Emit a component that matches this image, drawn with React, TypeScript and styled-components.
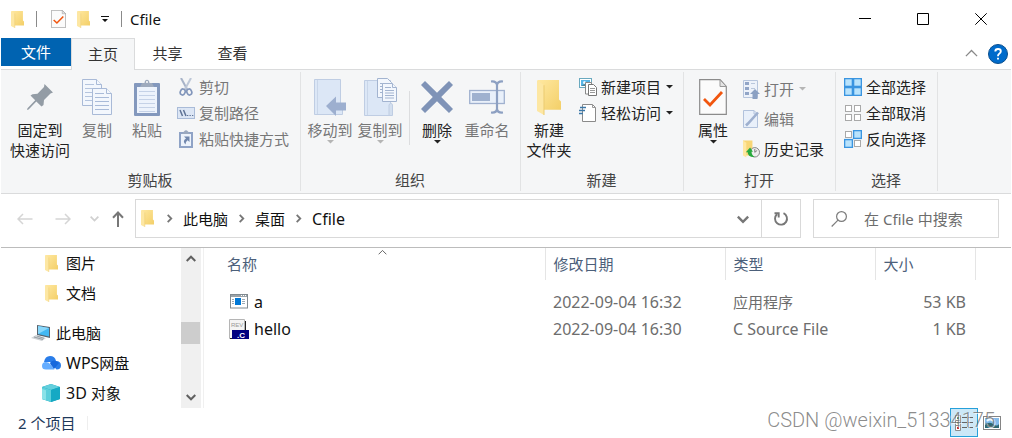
import React from "react";
import styled, { createGlobalStyle, css } from "styled-components";

const GlobalStyle = createGlobalStyle`
  * { box-sizing: border-box; }
  body {
    margin: 0;
    background: #fff;
    color: #111;
    font: 15px/20px "Noto Sans", "Noto Sans CJK SC", sans-serif;
  }
  button, input { font: inherit; color: inherit; background: none; border: 0; padding: 0; margin: 0; }
  svg { display: block; flex: none; }
  ul { list-style: none; margin: 0; padding: 0; }
`;

const Window = styled.div`
  position: relative;
  display: flex;
  flex-direction: column;
  min-height: 100vh;
  padding: 0 1px;
`;

const Latin = styled.span`
  font-size: 16px;
`;

/* Title bar */
const TitleBar = styled.header`
  display: flex;
  align-items: center;
  height: 38px;
  padding: 0 1px 0 10px;
`;
const QuickAccess = styled.div`
  display: flex;
  align-items: center;
  gap: 12px;
`;
const TitleRule = styled.span`
  width: 1px;
  height: 16px;
  background: #8a8a8a;
`;
const QuickButtons = styled.div`
  display: flex;
  align-items: center;
  gap: 11px;
  padding-left: 2px;
`;
const PlainButton = styled.button`
  display: flex;
  align-items: center;
  justify-content: center;
`;
const WindowTitle = styled.h1`
  margin: 0 auto 0 8px;
  font-size: 15px;
  font-weight: 400;
`;
const WindowButton = styled(PlainButton)`
  width: 58px;
  height: 38px;
`;

/* Ribbon tabs */
const TabBar = styled.nav`
  display: flex;
  height: 31px;
`;
const Tab = styled.button<{ $kind?: "file" | "active" }>`
  width: 65px;
  height: 31px;
  padding-bottom: 2px;
  color: #333;
  ${(p) =>
    p.$kind === "file" &&
    css`
      width: 70px;
      height: 28px;
      padding-bottom: 0;
      background: #0063b1;
      color: #fff;
    `}
  ${(p) =>
    p.$kind === "active" &&
    css`
      position: relative;
      width: 64px;
      height: 32px;
      background: #f5f6f7;
      border: 1px solid #dadbdc;
      border-bottom: 0;
    `}
`;
const TabActions = styled.div`
  display: flex;
  align-items: center;
  gap: 10px;
  margin-left: auto;
  padding-right: 3px;
`;

/* Ribbon */
const Ribbon = styled.section`
  display: flex;
  height: 125px;
  padding: 2px 0;
  background: #f5f6f7;
  border-top: 1px solid #dadbdc;
  border-bottom: 1px solid #dadbdc;
`;
const GroupBox = styled.section<{ $width: number }>`
  display: flex;
  flex-direction: column;
  flex: none;
  width: ${(p) => p.$width}px;
  border-right: 1px solid #e2e3e4;
`;
const GroupBody = styled.div<{ $pad: number }>`
  display: flex;
  flex: 1;
  padding: 2px 0 0 ${(p) => p.$pad}px;
`;
const GroupLabel = styled.h2`
  margin: 0;
  padding: 0 1px 1px 0;
  font-size: 15px;
  font-weight: 400;
  text-align: center;
  color: #444;
`;
const Big = styled.button<{ $width?: number }>`
  display: flex;
  flex-direction: column;
  align-items: center;
  align-self: flex-start;
  width: ${(p) => p.$width ?? 50}px;
  white-space: nowrap;
  color: #222;
  &:disabled { color: #777; }
`;
const BigIcon = styled.span`
  display: flex;
  align-items: center;
  justify-content: center;
  height: 46px;
`;
const SmallColumn = styled.div<{ $row: number }>`
  display: grid;
  grid-auto-rows: ${(p) => p.$row}px;
  align-content: start;
  justify-items: start;
  margin-left: 5px;
`;
const Small = styled.button`
  display: flex;
  align-items: center;
  gap: 4px;
  white-space: nowrap;
  color: #222;
  &:disabled { color: #777; }
`;
const CaretSlot = styled.span`
  padding-left: 1px;
`;
const Divider = styled.span`
  width: 1px;
  height: 54px;
  margin: 17px 2px 0 4px;
  background: #dcdddf;
`;

/* Address bar */
const AddressRow = styled.div`
  display: flex;
  align-items: center;
  height: 54px;
  padding: 0 12px 4px 10px;
  border-bottom: 1px solid #bcbcbc;
`;
const NavButton = styled(PlainButton)<{ $width: number }>`
  width: ${(p) => p.$width}px;
  height: 38px;
`;
const AddressBox = styled.div`
  display: flex;
  flex: 1;
  align-items: center;
  height: 39px;
  margin-right: 12px;
  border: 1px solid #d9d9d9;
`;
const Crumbs = styled.div`
  display: flex;
  flex: 1;
  align-items: center;
  gap: 9px;
  padding-left: 5px;
`;
const CrumbIcon = styled.span`
  padding-right: 2px;
`;
const Crumb = styled.a`
  color: #111;
  text-decoration: none;
`;
const Refresh = styled(PlainButton)`
  width: 39px;
  height: 37px;
  border-left: 1px solid #d9d9d9;
`;
const Search = styled.label`
  display: flex;
  align-items: center;
  gap: 16px;
  width: 186px;
  height: 39px;
  padding-left: 17px;
  border: 1px solid #d9d9d9;
`;
const SearchInput = styled.input`
  flex: 1;
  min-width: 0;
  outline: 0;
  &::placeholder { color: #6d6d6d; opacity: 1; }
`;

/* Body */
const Body = styled.main`
  display: flex;
  flex: 1;
`;
const Sidebar = styled.nav`
  width: 180px;
`;
const Tree = styled.ul`
  & + & { padding-top: 10px; }
`;
const TreeItem = styled.li<{ $depth: number }>`
  padding-left: ${(p) => (p.$depth === 0 ? 30 : 40)}px;
`;
const TreeLink = styled.a`
  display: grid;
  grid-template-columns: 20px 1fr;
  align-items: center;
  gap: 5px;
  height: 30px;
  color: #111;
  text-decoration: none;
  svg { justify-self: center; }
`;
const ScrollTrack = styled.div`
  display: flex;
  flex-direction: column;
  width: 20px;
  background: #f0f0f0;
`;
const ScrollButton = styled(PlainButton)`
  height: 22px;
`;
const Thumb = styled.span`
  height: 22px;
  margin: 52px 1px auto 0;
  background: #cdcdcd;
`;
const FilePane = styled.section`
  position: relative;
  flex: 1;
  margin-left: 2px;
  border-left: 1px solid #f0f0f0;
`;
const SortMark = styled.span`
  position: absolute;
  top: 0;
  left: 174px;
`;
const FileTable = styled.table`
  border-collapse: collapse;
  table-layout: fixed;
  width: 771px;
`;
const HeadCell = styled.th<{ $width: number }>`
  width: ${(p) => p.$width}px;
  height: 32px;
  padding: 0 0 0 8px;
  text-align: left;
  font-weight: 400;
  color: #4c607a;
  border-right: 1px solid #e5e5e5;
  &:first-child { padding-left: 23px; }
`;
const Rows = styled.tbody`
  &::before { content: ""; display: block; height: 8px; }
`;
const Cell = styled.td<{ $right?: boolean }>`
  height: 27px;
  padding: 0 9px 0 8px;
  color: #6d6d6d;
  text-align: ${(p) => (p.$right ? "right" : "left")};
  white-space: nowrap;
`;
const NameCell = styled(Cell)`
  padding-left: 25px;
  color: #111;
`;
const FileName = styled.span`
  display: flex;
  align-items: center;
  gap: 5px;
`;

/* Status bar */
const StatusBar = styled.footer`
  display: flex;
  align-items: center;
  height: 30px;
  padding: 0 5px 1px 17px;
  color: #1e395b;
`;
const Count = styled.span`
  padding-right: 12px;
  margin-right: auto;
  line-height: 14px;
  border-right: 1px solid #eee;
`;
const ViewButton = styled(PlainButton)<{ $on?: boolean }>`
  width: 28px;
  height: 29px;
  border: 1px solid ${(p) => (p.$on ? "#26a0da" : "transparent")};
  background: ${(p) => (p.$on ? "#cce8f7" : "transparent")};
`;
const Watermark = styled.span`
  position: absolute;
  right: 17px;
  bottom: 6px;
  font: 20px/24px Roboto, "Liberation Sans", sans-serif;
  font-weight: 300;
  color: rgba(110, 110, 110, 0.8);
  text-shadow: 1px 1px 0 rgba(255, 255, 255, 0.7);
  pointer-events: none;
`;

/* Icons */
const FolderIcon = ({ w = 13, h = 17 }: { w?: number; h?: number }) => (
  <svg width={w} height={h} viewBox="0 0 24 34" preserveAspectRatio="none">
    <defs>
      <linearGradient id="folderFace" x1="0" y1="0" x2="1" y2="1">
        <stop offset="0" stopColor="#ffe8a0" />
        <stop offset="1" stopColor="#f3cf68" />
      </linearGradient>
    </defs>
    <path d="M1 0H22V19L24 21V29H6L1 27Z" fill="url(#folderFace)" />
    <path d="M0 0L7 5V34L0 30Z" fill="#fde7a3" />
    <path d="M7 5V34" stroke="#eccb70" strokeWidth="1" />
  </svg>
);
const CheckedPage = ({ w, h }: { w: number; h: number }) => (
  <svg width={w} height={h} viewBox="0 0 28 36" preserveAspectRatio="none">
    <path d="M.7.7H21L27.3 7.5V35.3H.7Z" fill="#fbfbfb" stroke="#8b8b8b" strokeWidth="1.2" />
    <path d="M21 .7V7.5H27.3Z" fill="#e4e4e4" stroke="#999" />
    <path d="M5 20L11 26L23 13" fill="none" stroke="#f1560f" strokeWidth="2.8" />
  </svg>
);
const Caret = ({ color = "#222" }: { color?: string }) => (
  <svg width="7" height="4" viewBox="0 0 7 4"><path d="M0 0H7L3.5 3.6Z" fill={color} /></svg>
);
const QuickCaret = () => (
  <svg width="8" height="8" viewBox="0 0 8 8"><path d="M0 1H8V2H0ZM1 4H7L4 7Z" fill="#111" /></svg>
);
const Chevron = ({ dir, color = "#777", size = 10, width = 2 }: { dir: "up" | "down" | "right"; color?: string; size?: number; width?: number }) => (
  <svg width={size} height={size} viewBox="0 0 10 10" fill="none" stroke={color} strokeWidth={width}>
    <path d={{ up: "M.7 7L5 2.7L9.3 7", down: "M.7 3L5 7.3L9.3 3", right: "M3 .9L7 5L3 9.1" }[dir]} />
  </svg>
);
const PinIcon = () => (
  <svg width="26" height="26" viewBox="0 0 26 26">
    <path d="M17.500 0L26 8.500L23.500 9.500L17 16L16.500 21L14.500 22.500L9.300 17.500L1.600 25.500L0 26L.5 24.200L8.200 16.300L3.500 11.600L5.500 10.300L10.500 9.800L17 3Z" fill="#939ca5" />
  </svg>
);
const pageLines = (x: number, y: number, w: number, n: number, gap: number) =>
  Array.from({ length: n }, (_, i) => `M${x} ${y + i * gap}h${w}`).join("");
const CopyIcon = () => (
  <svg width="30" height="36" viewBox="0 0 30 36" fill="#f3f7fd" stroke="#a9bad7">
    <path d="M.5.5H14.500L19.500 5.500V26.500H.5Z" />
    <path d="M14.500.5V5.500H19.500" />
    <path d={pageLines(3, 5.5, 9, 1, 4) + pageLines(3, 9.5, 13, 4, 4)} stroke="#b4c4de" />
    <path d="M10.500 9.500H24.500L29.500 14.500V35.500H10.500Z" />
    <path d="M24.500 9.500V14.500H29.500" />
    <path d={pageLines(13, 14.5, 9, 1, 4) + pageLines(13, 18.5, 14, 4, 4)} stroke="#a9bbd9" />
  </svg>
);
const PasteIcon = () => (
  <svg width="26" height="37" viewBox="0 0 26 37">
    <rect y="4" width="26" height="33" rx="1" fill="#8398bd" />
    <path d="M3 8H23V34H3Z" fill="#edf3fc" />
    <path d="M6 8L8 4H10.500C10.500 -.5 15.500 -.5 15.500 4H18L20 8Z" fill="#9eaabd" />
    <circle cx="13" cy="3" r="1" fill="#fff" />
    <path d={pageLines(5, 12.5, 16, 6, 4)} stroke="#c5d2e7" />
  </svg>
);
const CutIcon = () => (
  <svg width="18" height="18" viewBox="0 0 18 18" fill="none">
    <path d="M4 0L10.500 12" stroke="#a7b3c8" strokeWidth="2" />
    <path d="M14 0L7.500 12" stroke="#bdc7d7" strokeWidth="2" />
    <ellipse cx="5.700" cy="14" rx="2.400" ry="3" transform="rotate(20 5.700 14)" stroke="#8296bb" strokeWidth="1.700" />
    <ellipse cx="12.300" cy="14" rx="2.400" ry="3" transform="rotate(-20 12.300 14)" stroke="#8296bb" strokeWidth="1.700" />
  </svg>
);
const PathIcon = () => (
  <svg width="18" height="12" viewBox="0 0 18 12">
    <rect x=".5" y=".5" width="17" height="11" fill="#dce6f5" stroke="#a9bbd8" />
    <path d="M3 3L5.500 9M6.500 3L9 9" stroke="#5e7396" strokeWidth="1.500" />
    <path d="M10 8.500h1.300M12.500 8.500h1.300M15 8.500h1.300" stroke="#5e7396" />
  </svg>
);
const ShortcutIcon = () => (
  <svg width="18" height="18" viewBox="0 0 18 18">
    <path d="M2 2H16V18H2Z" fill="#8fa3c6" />
    <path d="M4 4H14V16H4Z" fill="#edf3fb" />
    <path d="M5 4L7 1.500Q9-1 11 1.500L13 4Z" fill="#9ba9bf" />
    <path d="M7 6.500H12.500V12L10.600 10.200Q8.500 11.500 8.500 14.500Q5 11 9 8.500Z" fill="#7187ad" />
  </svg>
);
const book = (
  <>
    <path d="M.5.5H26.500V24L28.500 26V35.500H.5Z" fill="#dce7f6" stroke="#bfcde3" />
    <path d="M3.500 1V35" stroke="#c9d6e9" />
  </>
);
const MoveIcon = () => (
  <svg width="32" height="37" viewBox="0 0 32 37">
    {book}
    <path d="M12 27L22 17.500V23.500H32V31.500H22V37Z" fill="#9dafcf" />
  </svg>
);
const CopyToIcon = () => (
  <svg width="33" height="38" viewBox="0 0 33 38">
    <g transform="translate(0 2)">{book}</g>
    <g fill="#f3f7fd" stroke="#a3b4d0">
      <path d="M13.500.5H23.500L27.500 4.500V19.500H13.500Z" />
      <path d={pageLines(16, 5.5, 8, 4, 3)} />
      <path d="M18.500 5.500H28.500L32.500 9.500V23.500H18.500Z" />
      <path d="M28.500 5.500V9.500H32.500" />
      <path d={pageLines(21, 9.5, 6, 1, 3) + pageLines(21, 12.5, 9, 4, 2.5)} />
    </g>
    <path d="M25 37V27Q27 23 28.500 27V37" fill="#d3dfef" stroke="#bfcde3" />
  </svg>
);
const DeleteIcon = () => (
  <svg width="32" height="32" viewBox="0 0 32 32">
    <path d="M4 0L16 11.800L28 0L32 4L20.200 16L32 28L28 32L16 20.200L4 32L0 28L11.800 16L0 4Z" fill="#7f93b7" />
  </svg>
);
const RenameIcon = () => (
  <svg width="36" height="34" viewBox="0 0 36 34" fill="none">
    <rect x=".7" y="10.500" width="34.600" height="13" fill="#e9f0fa" stroke="#a0b1cf" strokeWidth="1.300" />
    <rect x="3" y="13" width="18" height="8" fill="#9fb1cf" />
    <path d="M22 1.500Q27.500 1 28 5Q28.500 1 34 1.500M28 4V30M22 32.500Q27.500 33 28 29Q28.500 33 34 32.500" stroke="#8da0c2" strokeWidth="2.200" />
  </svg>
);
const NewItemIcon = () => (
  <svg width="18" height="18" viewBox="0 0 18 18">
    <rect x=".5" y=".5" width="12" height="9" fill="#fff" stroke="#6aa9bf" />
    <path d="M2 2H11V8H2Z" fill="#56b5e6" />
    <circle cx="5.500" cy="4.500" r="1.500" fill="#e8f7ff" />
    <path d="M2 8Q6 5 11 6V8Z" fill="#4b8295" />
    <path d="M6.500 4.500H12.500V16H6.500Z" fill="#fff" stroke="#888" />
    <path d="M9.500 6.500H14.500L17.500 9.500V17.500H9.500Z" fill="#fff" stroke="#777" />
    <path d={pageLines(11, 10.5, 5, 3, 2)} stroke="#999" />
  </svg>
);
const EasyAccessIcon = () => (
  <svg width="18" height="18" viewBox="0 0 18 18">
    <path d="M3.500.5H13.500L16.500 3.500V17.500H3.500Z" fill="#fff" stroke="#8a8a8a" />
    <path d="M13.500.5V3.500H16.500" fill="none" stroke="#999" />
    <path d="M1 3.500H7M0 6.500H6M0 9.500H4" stroke="#3c78a8" strokeWidth="1.400" />
  </svg>
);
const OpenIcon = () => (
  <svg width="17" height="19" viewBox="0 0 17 19">
    <path d="M.5.500H14.500V17.500H.5Z" fill="#edf2fa" stroke="#b6c5dd" />
    <path d="M2 2H6V5H2ZM2 7H6V10H2ZM2 12H6V15H2Z" fill="#91a5c7" />
    <path d="M8 3.500H12M8 8.500H12" stroke="#b9c7dc" />
    <path d="M12 9L17 14H14.500V19H9.500V14H7Z" fill="#8ba0c2" />
  </svg>
);
const EditIcon = () => (
  <svg width="17" height="18" viewBox="0 0 17 18">
    <path d="M.5.500H11L14.500 4V17.500H.5Z" fill="#e9f0fa" stroke="#b2c2dc" />
    <path d="M11 .5V4H14.500" fill="none" stroke="#b2c2dc" />
    <path d="M15 2.500L5 13.500L3 15.500" stroke="#9eb0cf" strokeWidth="2.600" />
  </svg>
);
const HistoryIcon = () => (
  <svg width="17" height="18" viewBox="0 0 18 18">
    <path d="M0 0H10V16H3L0 14Z" fill="#f8d676" />
    <path d="M0 0L3.500 2.500V18L0 16Z" fill="#ffe7a0" />
    <circle cx="12.500" cy="12.500" r="5" fill="#eee" stroke="#828282" />
    <path d="M12.500 9V12.500L15 10.500" fill="none" stroke="#777" />
    <path d="M3 12.500L7.500 7.500L10.500 12H9Q9 15.500 12.500 17.500Q5 18 5 12.500Z" fill="#27a93c" />
  </svg>
);
const SelectIcon = ({ on }: { on: number[] }) => (
  <svg width="18" height="18" viewBox="0 0 18 18">
    {[0, 1, 2, 3].map((i) => {
      const lit = on.includes(i);
      const inset = lit ? 0.6 : 1.5;
      return (
        <rect
          key={i}
          x={(i % 2) * 9 + inset}
          y={Math.floor(i / 2) * 9 + inset}
          width={9 - inset * 2}
          height={9 - inset * 2}
          fill={lit ? "#b9e3fc" : "#fff"}
          stroke={lit ? "#3a95e0" : "#a9a9a9"}
          strokeWidth={lit ? 1.4 : 1}
        />
      );
    })}
  </svg>
);
const ArrowIcon = ({ dir, color }: { dir: "left" | "right" | "up"; color: string }) => (
  <svg width="16" height="16" viewBox="0 0 16 16" fill="none" stroke={color} strokeWidth={dir === "up" ? 2 : 1.5}>
    <path d={{ left: "M15.500 8H1M6 3L1 8L6 13", right: "M.5 8H15M10 3L15 8L10 13", up: "M8 16V1.500M3 6.700L8 1.500L13 6.700" }[dir]} />
  </svg>
);
const RefreshIcon = () => (
  <svg width="16" height="16" viewBox="0 0 16 16" fill="none" stroke="#777" strokeWidth="1.900">
    <path d="M10.500 2.200A6 6 0 1 1 4 3.200M1.500 2.200H5.700V6.500" />
  </svg>
);
const SearchIcon = () => (
  <svg width="17" height="16" viewBox="0 0 17 16" fill="none" stroke="#7c7c7c" strokeWidth="1.200">
    <circle cx="10.500" cy="5.500" r="4.900" />
    <path d="M7 9.200L.7 15.500" />
  </svg>
);
const PcIcon = () => (
  <svg width="20" height="18" viewBox="0 0 20 18">
    <path d="M6 1L19 3V14L6 11Z" fill="#57636e" />
    <path d="M7 2L18 4V12.500L7 10Z" fill="#43b8f3" />
    <path d="M7 2L18 4L7 10Z" fill="#8ad8fb" />
    <path d="M5 11L15 14L11 17L0 14Z" fill="#cfd3d6" />
    <path d="M3 13L12 15.500M6 12L13 14.300" stroke="#98a0a6" />
  </svg>
);
const CloudIcon = () => (
  <svg width="19" height="14" viewBox="0 0 19 14">
    <path d="M2 6Q3 0 8 0Q13 0 14 5Q19 5 19 9.500Q19 13.500 14.500 13.500L8 6Z" fill="#2a7de9" />
    <path d="M0 10Q0 6 4 6Q7 6 9 9L12.500 13.500H4Q0 13.500 0 10Z" fill="#65adff" />
    <path d="M8 7.500Q10 3.500 14 5L17 7L12 13Z" fill="#1769dd" />
  </svg>
);
const CubeIcon = () => (
  <svg width="18" height="18" viewBox="0 0 18 18">
    <path d="M9 0L18 3V15L9 18L0 15V3Z" fill="#0f9fb8" />
    <path d="M0 3L9 0L18 3L9 6Z" fill="#63cfdd" />
    <path d="M0 3L9 6V18L0 15Z" fill="#5ccfdb" />
    <path d="M9 6L18 3V15L9 18Z" fill="#16a9c4" />
    <path d="M0 5L4 6.300V16L0 15Z" fill="#8be2e8" />
  </svg>
);
const AppIcon = () => (
  <svg width="20" height="15" viewBox="0 0 20 15">
    <rect x="1.500" y=".5" width="17" height="13.500" fill="#fff" stroke="#818a90" />
    <path d="M2 1H18V3H2Z" fill="#9ba3a8" />
    <path d="M12 1.500h1M14 1.500h1M16 1.500h1" stroke="#fff" />
    <path d="M6 4H12V11H6Z" fill="#0078d7" />
    <path d="M3 5.500h2M3 7.500h2M3 9.500h2M13 5.500h3M13 7.500h3M13 9.500h3" stroke="#9cabb5" />
  </svg>
);
const SourceIcon = () => (
  <svg width="20" height="20" viewBox="0 0 20 20" fontFamily="Liberation Sans, sans-serif">
    <path d="M.5.5H15.500V19.500H.5Z" fill="#f4f4f4" stroke="#b5b5b5" />
    <path d="M16.500 2V11M1 19.500H3" stroke="#222" />
    <text x="2" y="7.500" fontSize="6" fill="#999">REV</text>
    <path d="M3 11H20V20H3Z" fill="#000080" />
    <text x="8" y="18.500" fontSize="8" fontWeight="700" fill="#fff">.C</text>
  </svg>
);
const DetailsIcon = () => (
  <svg width="18" height="16" viewBox="0 0 18 16">
    <path d="M.5.500H5.500V15.500H.5ZM.5 5.500H5.500M.5 10.500H5.500" fill="#fff" stroke="#8b8b8b" />
    <path d="M2 3H4M2 8H4" stroke="#4a9557" strokeWidth="2" />
    <path d="M2 13H4" stroke="#c6362d" strokeWidth="2" />
    <path d="M7 2.500h5M13 2.500h5M7 7.500h5M13 7.500h5M7 12.500h5M13 12.500h5" stroke="#666" />
  </svg>
);
const ThumbsIcon = () => (
  <svg width="18" height="14" viewBox="0 0 18 14">
    <rect x=".5" y=".5" width="17" height="13" fill="#fff" stroke="#858585" />
    <path d="M2 2H16V12H2Z" fill="#83bbeb" />
    <path d="M2 9Q6 5 10 8T16 8V12H2Z" fill="#2c6773" />
    <path d="M4 5Q7 2 10 5" fill="none" stroke="#e9f6ff" strokeWidth="2" />
  </svg>
);
const HelpIcon = () => (
  <svg width="20" height="20" viewBox="0 0 20 20">
    <circle cx="10" cy="10" r="9.500" fill="#006bcb" stroke="#0b4f8e" />
    <path d="M7.300 7.500Q7.300 5 10 5Q12.800 5 12.800 7.300Q12.800 9 11 10Q10 10.700 10 12.300M10 13.700V15.500" fill="none" stroke="#fff" strokeWidth="1.900" />
  </svg>
);

/* Composed pieces */
type BigProps = { icon: React.ReactNode; lines: string[]; disabled?: boolean; caret?: boolean; width?: number };
const BigButton = ({ icon, lines, disabled, caret, width }: BigProps) => (
  <Big disabled={disabled} $width={width}>
    <BigIcon>{icon}</BigIcon>
    {lines.map((l) => <span key={l}>{l}</span>)}
    {caret && <Caret color={disabled ? "#b5b5b5" : "#222"} />}
  </Big>
);
type SmallProps = { icon: React.ReactNode; label: string; disabled?: boolean; caret?: boolean };
const SmallButton = ({ icon, label, disabled, caret }: SmallProps) => (
  <Small disabled={disabled}>
    {icon}
    <span>{label}</span>
    {caret && <CaretSlot><Caret color={disabled ? "#b5b5b5" : "#222"} /></CaretSlot>}
  </Small>
);
const Group = ({ label, width, pad, children }: { label: string; width: number; pad: number; children: React.ReactNode }) => (
  <GroupBox $width={width}>
    <GroupBody $pad={pad}>{children}</GroupBody>
    <GroupLabel>{label}</GroupLabel>
  </GroupBox>
);
const TreeNode = ({ icon, depth, children }: { icon: React.ReactNode; depth: number; children: React.ReactNode }) => (
  <TreeItem $depth={depth}>
    <TreeLink href="#">{icon}<span>{children}</span></TreeLink>
  </TreeItem>
);

const files = [
  { name: "a", icon: <AppIcon />, date: "2022-09-04 16:32", type: "应用程序", size: "53 KB" },
  { name: "hello", icon: <SourceIcon />, date: "2022-09-04 16:30", type: <Latin>C Source File</Latin>, size: "1 KB" },
];

export default function App() {
  return (
    <Window>
      <GlobalStyle />
      <TitleBar>
        <QuickAccess>
          <FolderIcon />
          <TitleRule />
          <QuickButtons>
            <PlainButton aria-label="属性"><CheckedPage w={15} h={18} /></PlainButton>
            <PlainButton aria-label="新建文件夹"><FolderIcon /></PlainButton>
            <PlainButton aria-label="自定义快速访问工具栏"><QuickCaret /></PlainButton>
          </QuickButtons>
          <TitleRule />
        </QuickAccess>
        <WindowTitle>Cfile</WindowTitle>
        <WindowButton aria-label="最小化">
          <svg width="12" height="12"><path d="M0 5.500H12" stroke="#000" /></svg>
        </WindowButton>
        <WindowButton aria-label="最大化">
          <svg width="12" height="12"><path d="M.5.500H11.500V11.500H.5Z" fill="none" stroke="#000" /></svg>
        </WindowButton>
        <WindowButton aria-label="关闭">
          <svg width="12" height="12"><path d="M.3.300L11.700 11.700M11.700.300L.3 11.700" stroke="#000" /></svg>
        </WindowButton>
      </TitleBar>

      <TabBar>
        <Tab $kind="file">文件</Tab>
        <Tab $kind="active">主页</Tab>
        <Tab>共享</Tab>
        <Tab>查看</Tab>
        <TabActions>
          <PlainButton aria-label="折叠功能区"><Chevron dir="up" size={13} width={1} color="#888" /></PlainButton>
          <PlainButton aria-label="帮助"><HelpIcon /></PlainButton>
        </TabActions>
      </TabBar>

      <Ribbon>
        <Group label="剪贴板" width={300} pad={7}>
          <BigButton icon={<PinIcon />} lines={["固定到", "快速访问"]} width={64} />
          <BigButton icon={<CopyIcon />} lines={["复制"]} disabled />
          <BigButton icon={<PasteIcon />} lines={["粘贴"]} disabled />
          <SmallColumn $row={26}>
            <SmallButton icon={<CutIcon />} label="剪切" disabled />
            <SmallButton icon={<PathIcon />} label="复制路径" disabled />
            <SmallButton icon={<ShortcutIcon />} label="粘贴快捷方式" disabled />
          </SmallColumn>
        </Group>
        <Group label="组织" width={220} pad={4}>
          <BigButton icon={<MoveIcon />} lines={["移动到"]} disabled caret />
          <BigButton icon={<CopyToIcon />} lines={["复制到"]} disabled caret />
          <Divider />
          <BigButton icon={<DeleteIcon />} lines={["删除"]} caret />
          <BigButton icon={<RenameIcon />} lines={["重命名"]} disabled />
        </Group>
        <Group label="新建" width={163} pad={3}>
          <BigButton icon={<FolderIcon w={24} h={35} />} lines={["新建", "文件夹"]} />
          <SmallColumn $row={26}>
            <SmallButton icon={<NewItemIcon />} label="新建项目" caret />
            <SmallButton icon={<EasyAccessIcon />} label="轻松访问" caret />
          </SmallColumn>
        </Group>
        <Group label="打开" width={152} pad={4}>
          <BigButton icon={<CheckedPage w={28} h={36} />} lines={["属性"]} caret />
          <SmallColumn $row={30}>
            <SmallButton icon={<OpenIcon />} label="打开" disabled caret />
            <SmallButton icon={<EditIcon />} label="编辑" disabled />
            <SmallButton icon={<HistoryIcon />} label="历史记录" />
          </SmallColumn>
        </Group>
        <Group label="选择" width={102} pad={3}>
          <SmallColumn $row={26}>
            <SmallButton icon={<SelectIcon on={[0, 1, 2, 3]} />} label="全部选择" />
            <SmallButton icon={<SelectIcon on={[]} />} label="全部取消" />
            <SmallButton icon={<SelectIcon on={[1, 2]} />} label="反向选择" />
          </SmallColumn>
        </Group>
      </Ribbon>

      <AddressRow>
        <NavButton $width={28} aria-label="后退"><ArrowIcon dir="left" color="#d5d5d5" /></NavButton>
        <NavButton $width={48} aria-label="前进"><ArrowIcon dir="right" color="#d5d5d5" /></NavButton>
        <NavButton $width={14} aria-label="最近浏览的位置"><Chevron dir="down" size={9} color="#d0d0d0" /></NavButton>
        <NavButton $width={34} aria-label="上移"><ArrowIcon dir="up" color="#777" /></NavButton>
        <AddressBox>
          <Crumbs>
            <CrumbIcon><FolderIcon /></CrumbIcon>
            <Chevron dir="right" size={9} />
            <Crumb href="#">此电脑</Crumb>
            <Chevron dir="right" size={9} />
            <Crumb href="#">桌面</Crumb>
            <Chevron dir="right" size={9} />
            <Crumb href="#"><Latin>Cfile</Latin></Crumb>
          </Crumbs>
          <NavButton $width={37} aria-label="以前的位置"><Chevron dir="down" size={12} /></NavButton>
          <Refresh aria-label="刷新"><RefreshIcon /></Refresh>
        </AddressBox>
        <Search>
          <SearchIcon />
          <SearchInput type="text" aria-label="搜索" placeholder="在 Cfile 中搜索" />
        </Search>
      </AddressRow>

      <Body>
        <Sidebar>
          <Tree>
            <TreeNode depth={1} icon={<FolderIcon />}>图片</TreeNode>
            <TreeNode depth={1} icon={<FolderIcon />}>文档</TreeNode>
          </Tree>
          <Tree>
            <TreeNode depth={0} icon={<PcIcon />}>此电脑</TreeNode>
            <TreeNode depth={1} icon={<CloudIcon />}><Latin>WPS</Latin>网盘</TreeNode>
            <TreeNode depth={1} icon={<CubeIcon />}><Latin>3D </Latin>对象</TreeNode>
          </Tree>
        </Sidebar>
        <ScrollTrack>
          <ScrollButton aria-label="向上滚动"><Chevron dir="up" color="#606060" /></ScrollButton>
          <Thumb />
          <ScrollButton aria-label="向下滚动"><Chevron dir="down" color="#606060" /></ScrollButton>
        </ScrollTrack>
        <FilePane>
          <SortMark><Chevron dir="up" size={9} width={1} color="#555" /></SortMark>
          <FileTable>
            <thead>
              <tr>
                <HeadCell $width={341}>名称</HeadCell>
                <HeadCell $width={180}>修改日期</HeadCell>
                <HeadCell $width={150}>类型</HeadCell>
                <HeadCell $width={100}>大小</HeadCell>
              </tr>
            </thead>
            <Rows>
              {files.map((f) => (
                <tr key={f.name}>
                  <NameCell><FileName>{f.icon}<Latin>{f.name}</Latin></FileName></NameCell>
                  <Cell><Latin>{f.date}</Latin></Cell>
                  <Cell>{f.type}</Cell>
                  <Cell $right><Latin>{f.size}</Latin></Cell>
                </tr>
              ))}
            </Rows>
          </FileTable>
        </FilePane>
      </Body>

      <StatusBar>
        <Count>2 个项目</Count>
        <ViewButton $on aria-label="详细信息"><DetailsIcon /></ViewButton>
        <ViewButton aria-label="大缩略图"><ThumbsIcon /></ViewButton>
      </StatusBar>
      <Watermark>CSDN @weixin_51334175</Watermark>
    </Window>
  );
}
